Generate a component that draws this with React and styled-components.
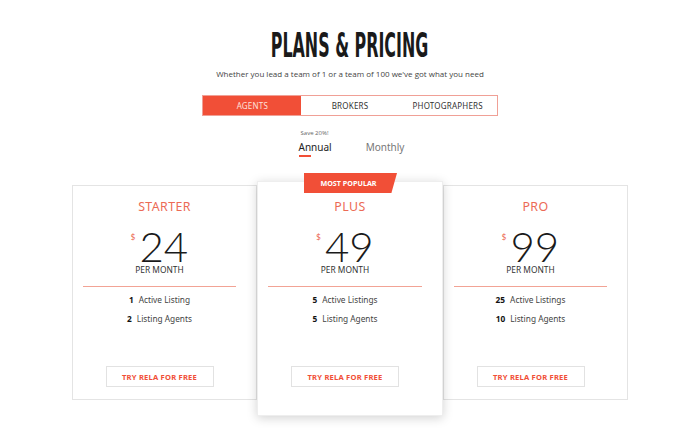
import React from "react";
import styled, { createGlobalStyle } from "styled-components";

const Global = createGlobalStyle`
  html, body { margin: 0; padding: 0; background: #fff; }
  body { font-family: "Noto Sans", "DejaVu Sans", sans-serif; color: #222; }
  * { box-sizing: border-box; }
`;

const ORANGE = "#f14f37";

const Page = styled.div`
  width: 700px;
  height: 441px;
  display: flex;
  flex-direction: column;
  align-items: center;
  padding-top: 28px;
  overflow: hidden;
`;

const Title = styled.h1`
  margin: 0;
  height: 35px;
  font-family: "Liberation Sans Narrow", "DejaVu Sans Condensed", "Liberation Sans", sans-serif;
  font-weight: 700;
  font-size: 34px;
  line-height: 35px;
  color: #1a1a1a;
  transform: scaleX(0.52);
  white-space: nowrap;
`;

const Subtitle = styled.p`
  margin: 5px 0 0;
  font-family: "Open Sans", sans-serif;
  font-size: 8px;
  line-height: 12px;
  color: #444;
`;

const Tabs = styled.div`
  margin-top: 15px;
  display: grid;
  grid-template-columns: repeat(3, 97.7px);
  border: 1px solid #f0a096;
  height: 21px;
`;

const Tab = styled.div`
  display: flex;
  align-items: center;
  justify-content: center;
  font-family: "Noto Sans", sans-serif;
  font-size: 8px;
  letter-spacing: 0.2px;
  color: ${(p) => (p.$active ? "#fde0da" : "#333")};
  background: ${(p) => (p.$active ? ORANGE : "#fff")};
`;

const Billing = styled.div`
  margin-top: 13px;
  display: flex;
  align-items: flex-end;
  gap: 34px;
  margin-left: 3px;
`;

const BillOpt = styled.div`
  display: flex;
  flex-direction: column;
  align-items: flex-start;
`;

const Save = styled.span`
  font-family: "Open Sans", sans-serif;
  font-size: 6px;
  line-height: 8px;
  color: #666;
  margin-left: 2px;
`;

const BillLabel = styled.span`
  margin-top: 3px;
  font-family: "Noto Sans", sans-serif;
  font-size: 10px;
  line-height: 14px;
  color: ${(p) => (p.$active ? "#222" : "#777")};
`;

const Underline = styled.span`
  margin-top: 1px;
  width: 12px;
  height: 2px;
  background: ${(p) => (p.$active ? ORANGE : "transparent")};
`;

const Cards = styled.div`
  margin-top: 28px;
  display: grid;
  grid-template-columns: 185px 186px 185px;
  align-items: start;
`;

const Card = styled.div`
  position: relative;
  display: flex;
  flex-direction: column;
  align-items: center;
  background: #fff;
  border: 1px solid ${(p) => (p.$featured ? "#eee" : "#e4e4e4")};
  height: ${(p) => (p.$featured ? "235px" : "215px")};
  margin-top: ${(p) => (p.$featured ? "-4px" : "0")};
  padding: ${(p) => (p.$featured ? "17px" : "13px")} 20px 0 10px;
  box-shadow: ${(p) => (p.$featured ? "0 2px 10px rgba(0,0,0,0.18)" : "none")};
  z-index: ${(p) => (p.$featured ? 2 : 1)};
`;

const Badge = styled.div`
  position: absolute;
  top: -9px;
  left: 46px;
  width: 93px;
  height: 20px;
  background: ${ORANGE};
  clip-path: polygon(0 0, 100% 0, 94% 100%, 0 100%);
  color: #fff;
  font-family: "Noto Sans", sans-serif;
  font-weight: 700;
  font-size: 7.2px;
  display: flex;
  align-items: center;
  justify-content: center;
  padding-right: 4px;
`;

const PlanName = styled.div`
  margin-left: 10px;
  font-family: "Noto Sans", sans-serif;
  font-size: 12.4px;
  line-height: 16px;
  letter-spacing: 0.4px;
  color: #ec6a55;
`;

const PriceRow = styled.div`
  margin-top: 15px;
  display: flex;
  align-items: flex-start;
  height: 32px;
`;

const Currency = styled.span`
  display: block;
  font-family: "Noto Sans", sans-serif;
  font-size: 8px;
  line-height: 10px;
  color: #ec6a55;
  margin-top: 2px;
  margin-right: 4px;
`;

const Amount = styled.span`
  display: block;
  font-family: "Lato", "Inter", sans-serif;
  font-weight: 300;
  font-size: 42px;
  line-height: 32px;
  height: 32px;
  color: #1a1a1a;
`;

const PerMonth = styled.div`
  margin-top: 3px;
  font-family: "Noto Sans", sans-serif;
  font-size: 8.4px;
  line-height: 10px;
  color: #333;
`;

const Divider = styled.div`
  align-self: stretch;
  height: 1px;
  background: #f2a395;
  margin-top: 11px;
`;

const Features = styled.ul`
  list-style: none;
  margin: 7px 0 0;
  padding: 0;
  display: flex;
  flex-direction: column;
  align-items: center;
  gap: 7px;
`;

const Feature = styled.li`
  font-family: "Noto Sans", sans-serif;
  font-size: 8.3px;
  line-height: 12px;
  color: #444;
  b {
    color: #111;
    font-weight: 700;
    margin-right: 5px;
  }
`;

const TryButton = styled.button`
  margin-top: 41px;
  width: 108px;
  height: 21px;
  background: #fff;
  border: 1px solid #e2e2e2;
  color: ${ORANGE};
  font-family: "Noto Sans", sans-serif;
  font-weight: 700;
  font-size: 7.6px;
  letter-spacing: 0.2px;
  cursor: pointer;
`;

const plans = [
  { name: "STARTER", price: 24, f: [["1", "Active Listing"], ["2", "Listing Agents"]] },
  { name: "PLUS", price: 49, featured: true, f: [["5", "Active Listings"], ["5", "Listing Agents"]] },
  { name: "PRO", price: 99, f: [["25", "Active Listings"], ["10", "Listing Agents"]] },
];

export default function App() {
  return (
    <>
      <Global />
      <Page>
        <Title>PLANS &amp; PRICING</Title>
        <Subtitle>Whether you lead a team of 1 or a team of 100 we've got what you need</Subtitle>
        <Tabs>
          <Tab $active>AGENTS</Tab>
          <Tab>BROKERS</Tab>
          <Tab>PHOTOGRAPHERS</Tab>
        </Tabs>
        <Billing>
          <BillOpt>
            <Save>Save 20%!</Save>
            <BillLabel $active>Annual</BillLabel>
            <Underline $active />
          </BillOpt>
          <BillOpt>
            <BillLabel>Monthly</BillLabel>
            <Underline />
          </BillOpt>
        </Billing>
        <Cards>
          {plans.map((p) => (
            <Card key={p.name} $featured={p.featured}>
              {p.featured && <Badge>MOST POPULAR</Badge>}
              <PlanName>{p.name}</PlanName>
              <PriceRow>
                <Currency>$</Currency>
                <Amount>{p.price}</Amount>
              </PriceRow>
              <PerMonth>PER MONTH</PerMonth>
              <Divider />
              <Features>
                {p.f.map(([n, t]) => (
                  <Feature key={t}>
                    <b>{n}</b>
                    {t}
                  </Feature>
                ))}
              </Features>
              <TryButton>TRY RELA FOR FREE</TryButton>
            </Card>
          ))}
        </Cards>
      </Page>
    </>
  );
}
